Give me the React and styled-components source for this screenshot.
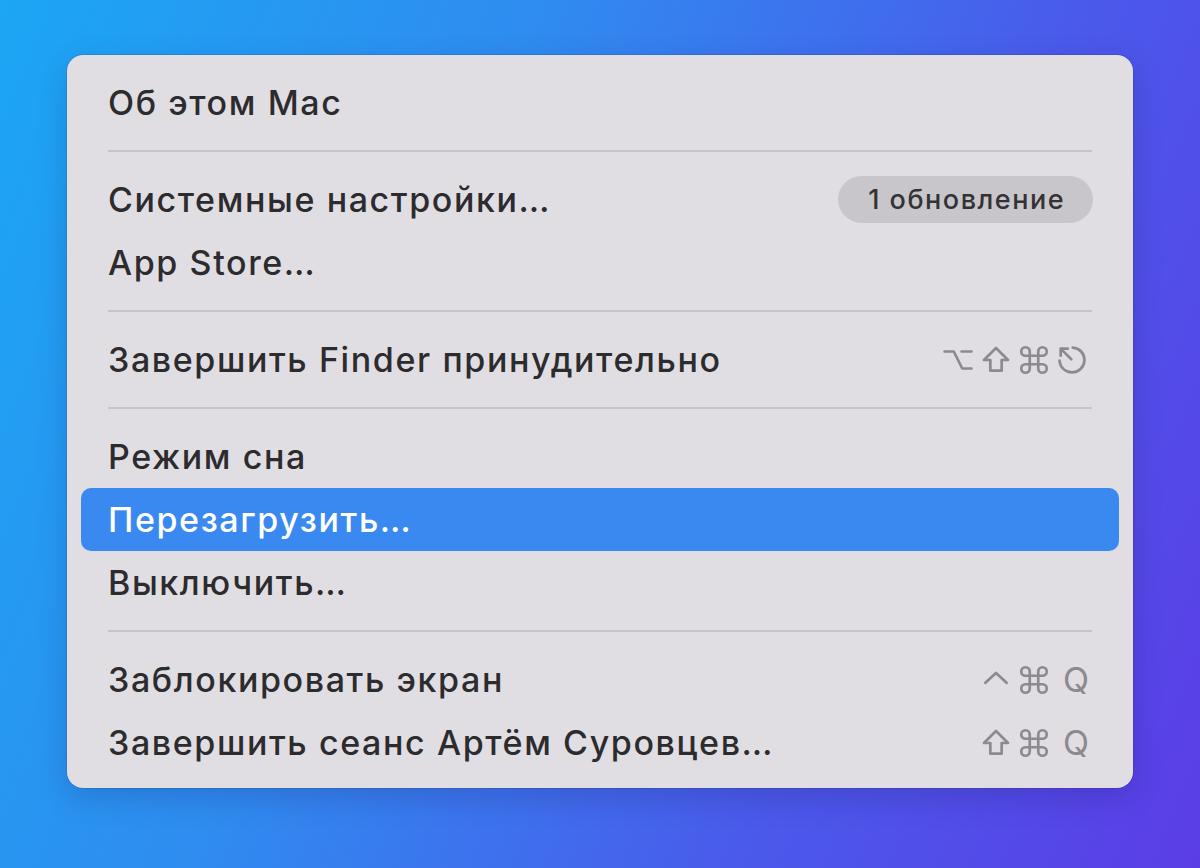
import React from 'react'
import styled, { createGlobalStyle } from 'styled-components'

const Global = createGlobalStyle`
  html, body { margin: 0; padding: 0; }
  body {
    font-family: Inter, "Noto Sans", "Liberation Sans", sans-serif;
    -webkit-font-smoothing: antialiased;
  }
`

const Desktop = styled.div`
  width: 1200px;
  height: 868px;
  box-sizing: border-box;
  padding: 55px 0 0 67px;
  background: linear-gradient(112deg, #1ca6f4 0%, #2f8cf0 35%, #4a5aeb 70%, #5b3de6 100%);
  overflow: hidden;
`

const Menu = styled.div`
  width: 1066px;
  box-sizing: border-box;
  padding: 16px 14px 14px;
  background: #e1dee3;
  border-radius: 16px;
  box-shadow: 0 0 0 1px rgba(0, 0, 0, 0.08), 0 10px 30px rgba(20, 10, 80, 0.18);
`

const Row = styled.div`
  height: 63px;
  display: flex;
  align-items: center;
  justify-content: space-between;
  padding: 0 30px 0 27px;
  border-radius: 10px;
  font-size: 34px;
  font-weight: 500;
  letter-spacing: 1.6px;
  color: ${p => (p.$active ? '#ffffff' : '#2c2b2e')};
  background: ${p => (p.$active ? '#3a89f0' : 'transparent')};
`

const Separator = styled.div`
  height: 34px;
  display: flex;
  align-items: center;
  padding: 0 27px;
  &::after {
    content: '';
    flex: 1;
    height: 2px;
    background: #c7c4c9;
  }
`

const Badge = styled.span`
  margin-right: -4px;
  height: 47px;
  padding: 0 28px 0 30px;
  display: flex;
  align-items: center;
  border-radius: 24px;
  background: #c9c6cb;
  color: #333234;
  font-size: 27px;
  letter-spacing: 1.5px;
`

const Keys = styled.span`
  display: flex;
  align-items: center;
  gap: 4px;
  color: #8c8a8e;
  font-size: 34px;
  font-weight: 400;
  letter-spacing: 0;
`

const KeyLetter = styled.span`
  margin-left: 8px;
  line-height: 1;
`

const Glyph = ({ children }) => (
  <svg width="34" height="34" viewBox="0 0 24 24" fill="none" stroke="currentColor"
    strokeWidth="1.9" strokeLinecap="round" strokeLinejoin="round">
    {children}
  </svg>
)

const OptionKey = () => (
  <Glyph><path d="M2.5 6h6.5l6 12h6.5M14.5 6h7" /></Glyph>
)

const ShiftKey = () => (
  <Glyph><path d="M12 3.5 3.5 12h4.5v7.5h8V12h4.5Z" /></Glyph>
)

const CmdKey = () => (
  <Glyph>
    <path d="M9 9V6a3 3 0 1 0-3 3h12a3 3 0 1 0-3-3v12a3 3 0 1 0 3-3H6a3 3 0 1 0 3 3Z" />
  </Glyph>
)

const EscKey = () => (
  <Glyph>
    <path d="M12.5 3.2A8.8 8.8 0 1 1 3.2 12.5" />
    <path d="M4 4l7.5 7.5M4 4h5M4 4v5" />
  </Glyph>
)

const CtrlKey = () => (
  <Glyph><path d="M4.5 14 12 7l7.5 7" /></Glyph>
)

export default function App() {
  return (
    <>
      <Global />
      <Desktop>
        <Menu>
          <Row>Об этом Mac</Row>
          <Separator />
          <Row>
            Системные настройки…
            <Badge>1 обновление</Badge>
          </Row>
          <Row>App Store…</Row>
          <Separator />
          <Row>
            Завершить Finder принудительно
            <Keys><OptionKey /><ShiftKey /><CmdKey /><EscKey /></Keys>
          </Row>
          <Separator />
          <Row>Режим сна</Row>
          <Row $active>Перезагрузить…</Row>
          <Row>Выключить…</Row>
          <Separator />
          <Row>
            Заблокировать экран
            <Keys><CtrlKey /><CmdKey /><KeyLetter>Q</KeyLetter></Keys>
          </Row>
          <Row>
            Завершить сеанс Артём Суровцев…
            <Keys><ShiftKey /><CmdKey /><KeyLetter>Q</KeyLetter></Keys>
          </Row>
        </Menu>
      </Desktop>
    </>
  )
}
